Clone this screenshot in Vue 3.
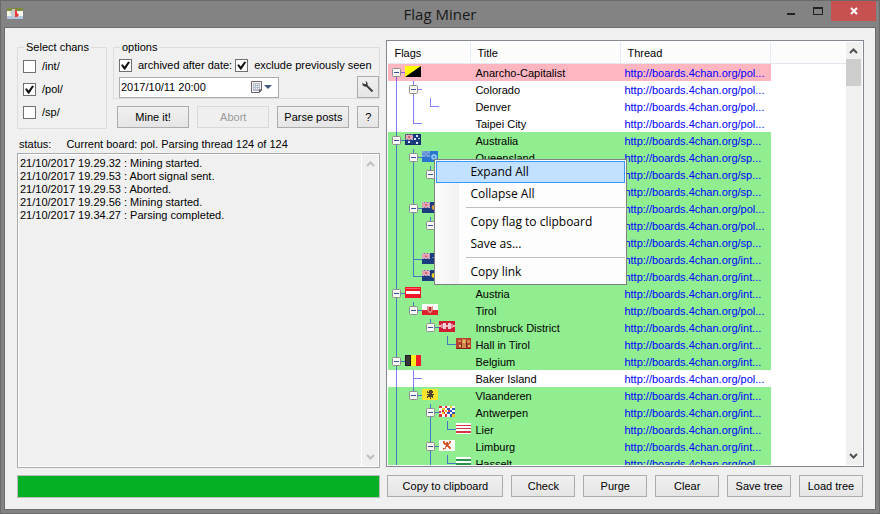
<script setup>
import { ref } from 'vue'

const chans = ref([
  { id: 'int', label: '/int/', on: false },
  { id: 'pol', label: '/pol/', on: true },
  { id: 'sp', label: '/sp/', on: false },
])
const archived = ref(true)
const exclude = ref(true)
const date = ref('2017/10/11 20:00')
const log = `21/10/2017 19.29.32 : Mining started.
21/10/2017 19.29.53 : Abort signal sent.
21/10/2017 19.29.53 : Aborted.
21/10/2017 19.29.56 : Mining started.
21/10/2017 19.34.27 : Parsing completed.`

// Each flag is a list of [path, fill] layers on a 16 x 11 canvas.
const all = 'M0 0h16v11H0z'
const blue = [
  [all, '#1c3c80'],
  ['M0 0h8v6H0z', '#5a6aa8'],
  ['M0 0h1l7 5v1H7L0 1zM8 0H7L0 5v1h1l7-5z', '#e8c4cc'],
  ['M3 0h2v6H3zM0 2h8v2H0z', '#fff'],
  ['M3.5 0h1v6h-1zM0 2.500h8v1H0z', '#e04050'],
]
const flags = {
  ancap: [[all, '#000'], ['M0 0h16L0 11z', '#ff0']],
  australia: [...blue, ['M3 7h2v2H3zM11 1h2v2h-2zM9 4h2v2H9zM13 4h2v1h-2zM11 8h2v2h-2z', '#dde3f5'], ['M0 0h16v11H0zM1 1v9h14V1z', '#10204c80']],
  queensland: [
    [all, '#2a75cf'],
    ['M0 0h8v6H0z', '#7ba4dd'],
    ['M3 0h2v6H3zM0 2h8v2H0z', '#5c8fd8'],
    ['M12 3a3 3 0 1 0 .1 0z', '#8cc6f4'],
    ['M12 5a1 1 0 1 0 .1 0z', '#3a7cd0'],
  ],
  nsw: [...blue, ['M12 3a2.500 2.500 0 1 0 .1 0z', '#d89a3c']],
  victoria: [...blue, ['M12 2h1v2h2v1h-2v3h-1V5h-2V4h2z', '#7080b8']],
  wa: [...blue, ['M12 3a2.500 2.500 0 1 0 .1 0z', '#f0d020'], ['M12 5h2v1h-2z', '#222']],
  austria: [[all, '#f01828'], ['M1 4h14v3H1z', '#fff'], ['M1 1h14v1H1z', '#f86068']],
  tirol: [[all, '#fff'], ['M0 6h16v5H0z', '#e0202c'], ['M5 2l2 1 1-1 1 1 2-1v4L9 9H7L5 6z', '#e08a80'], ['M7 3h2v4H7z', '#c03038']],
  innsbruck: [[all, '#d01c34'], ['M0 4h16v2H0z', '#f0b0b8'], ['M4 2h3v6H4zM9 2h3v6H9z', '#e8d0d4'], ['M2 3h2v4H2zM12 3h2v4h-2z', '#e08a98']],
  hall: [[all, '#b8402c'], ['M2 2h3v2H2zM11 2h3v3h-3zM6 1h4v9H6z', '#cf8a4c'], ['M7 2h2v3H7zM3 7h2v2H3zM12 7h2v2h-2z', '#e0c06a'], ['M5 5h1v4H5zM10 4h1v5h-1zM0 10h16v1H0z', '#7c241c']],
  belgium: [[all, '#f01c28'], ['M0 0h11v11H0z', '#fbee20'], ['M0 0h6v11H0z', '#1c1c1c'], ['M1 1h4v9H1z', '#383838']],
  vlaanderen: [[all, '#fbe42c'], ['M5 2h1v1h1V1h3v1h1v2h-1v1h2v1h-1v3h-1V8H9v2H8V8H6v1H5V7h1V6H5V5h2V4H5z', '#4a4428'], ['M8 3h1v1H8z', '#cc3020']],
  antwerpen: [
    [all, '#fff'],
    ['M0 0h3v2H0zM6 0h2v2H6zM3 4h2v2H3zM0 8h3v3H0zM6 8h2v3H6z', '#e03040'],
    ['M8 2h3v2H8zM13 2h3v2h-3zM11 4h2v2h-2zM8 6h3v2H8zM13 6h3v2h-3zM11 8h2v3h-2z', '#2f58b8'],
    ['M11 0h2v2h-2zM3 2h3v2H3zM6 4h2v2H6zM3 6h3v2H3zM13 8h3v3h-3z', '#f4c020'],
    ['M0 5h2v2H0zM5 6h1v2H5zM9 4h2v2H9z', '#d83848'],
  ],
  lier: [[all, '#fff'], ['M0 2h16v1H0zM0 5h16v1H0zM0 8h16v2H0z', '#d43848']],
  limburg: [[all, '#fff'], ['M4 1h2v2h1V2h2v1h1V1h2v2h-1v1h-1v2h1v1h1v2h-2V8H9V7H7v2H5v1H4V8h2V6h1V5H5V4H4z', '#e0603c'], ['M7 3h2v3H7z', '#c44c20']],
  hasselt: [[all, '#fff'], ['M0 2h16v2H0zM0 6h16v2H0zM0 9h16v2H0z', '#2c9448']],
}

// level: depth; box: expandable; pass: ancestor levels whose line runs through;
// more: the row's own line continues to a later sibling.
const rows = [
  { level: 0, box: true, first: true, more: true, flag: 'ancap', title: 'Anarcho-Capitalist', board: 'pol', tone: 'pink' },
  { level: 1, box: true, more: true, pass: [0], title: 'Colorado', board: 'pol', tone: 'white' },
  { level: 2, pass: [0, 1], title: 'Denver', board: 'pol', tone: 'white' },
  { level: 1, pass: [0], title: 'Taipei City', board: 'pol', tone: 'white' },
  { level: 0, box: true, more: true, flag: 'australia', title: 'Australia', board: 'sp' },
  { level: 1, box: true, more: true, pass: [0], flag: 'queensland', title: 'Queensland', board: 'sp' },
  { level: 2, box: true, pass: [0, 1], title: '', board: 'sp' },
  { level: 3, pass: [0, 1], title: '', board: 'sp' },
  { level: 1, box: true, more: true, pass: [0], flag: 'nsw', title: '', board: 'pol' },
  { level: 2, box: true, pass: [0, 1], title: '', board: 'pol' },
  { level: 3, pass: [0, 1], title: '', board: 'sp' },
  { level: 1, more: true, pass: [0], flag: 'victoria', title: '', board: 'int' },
  { level: 1, pass: [0], flag: 'wa', title: '', board: 'int' },
  { level: 0, box: true, more: true, flag: 'austria', title: 'Austria', board: 'int' },
  { level: 1, box: true, pass: [0], flag: 'tirol', title: 'Tirol', board: 'pol' },
  { level: 2, box: true, pass: [0], flag: 'innsbruck', title: 'Innsbruck District', board: 'int' },
  { level: 3, pass: [0], flag: 'hall', title: 'Hall in Tirol', board: 'int' },
  { level: 0, box: true, more: true, flag: 'belgium', title: 'Belgium', board: 'int' },
  { level: 1, more: true, pass: [0], title: 'Baker Island', board: 'pol', tone: 'white' },
  { level: 1, box: true, pass: [0], flag: 'vlaanderen', title: 'Vlaanderen', board: 'int' },
  { level: 2, box: true, more: true, pass: [0], flag: 'antwerpen', title: 'Antwerpen', board: 'int' },
  { level: 3, pass: [0, 2], flag: 'lier', title: 'Lier', board: 'int' },
  { level: 2, box: true, more: true, pass: [0], flag: 'limburg', title: 'Limburg', board: 'int' },
  { level: 3, pass: [0, 2], flag: 'hasselt', title: 'Hasselt', board: 'pol' },
]

function lines(r) {
  const x = 8 + 17 * r.level
  let d = (r.pass || []).map((l) => `M${8 + 17 * l} 0h1v17h-1z`).join('')
  const top = r.first ? 8 : 0
  d += `M${x} ${top}h1v${(r.more ? 17 : 9) - top}h-1z`
  d += `M${x + 1} 8h8v1h-8z`
  return d
}

const menu = [['Expand All', 'Collapse All'], ['Copy flag to clipboard', 'Save as...'], ['Copy link']]
const actions = ['Copy to clipboard', 'Check', 'Purge', 'Clear', 'Save tree', 'Load tree']
</script>

<template>
  <div class="window">
    <header class="titlebar">
      <svg class="logo" width="16" height="11" viewBox="0 0 16 11">
        <path d="M0 0h16v11H0z" fill="#fbf8ee" />
        <path d="M0 0h16v3H0z" fill="#7d8c3c" />
        <path d="M0 8h16v3H0z" fill="#b4c6dc" />
        <path d="M3 4l3-3h2v6l-2 2-2-2z" fill="#c9cbcb" />
        <path d="M8 1l2 2v2l2 2-2 2H8z" fill="#ea3838" />
      </svg>
      <h1>Flag Miner</h1>
      <div class="caption">
        <button type="button" class="cap" aria-label="Minimize">
          <svg width="10" height="10"><path d="M1 7h8v2H1z" fill="#222" /></svg>
        </button>
        <button type="button" class="cap" aria-label="Maximize">
          <svg width="10" height="10"><path d="M0 1h10v8H0zM1 3v5h8V3z" fill="#222" fill-rule="evenodd" /></svg>
        </button>
        <button type="button" class="cap close" aria-label="Close">
          <svg width="8" height="8"><path d="M1 1l6 6M7 1L1 7" stroke="#fff" stroke-width="2" /></svg>
        </button>
      </div>
    </header>

    <main class="client">
      <section class="left">
        <div class="setup">
          <fieldset class="chans">
            <legend>Select chans</legend>
            <label v-for="c in chans" :key="c.id" class="check">
              <input v-model="c.on" type="checkbox" />{{ c.label }}
            </label>
          </fieldset>
          <div class="side">
            <fieldset class="options">
              <legend>options</legend>
              <div class="checks">
                <label class="check"><input v-model="archived" type="checkbox" />archived after date:</label>
                <label class="check"><input v-model="exclude" type="checkbox" />exclude previously seen</label>
              </div>
              <div class="dates">
                <div class="date">
                  <input v-model="date" type="text" aria-label="Archived after date" />
                  <button type="button" class="drop" aria-label="Open calendar">
                    <svg width="21" height="12">
                      <path d="M.5.5h10v9l-2 2h-8z" fill="#f4f4f4" stroke="#6e6666" />
                      <path d="M2 2h7v8H2z" fill="#b4bccb" />
                      <path d="M3 3h1v1H3zM5 3h1v1H5zM7 3h1v1H7zM3 5h1v1H3zM5 5h1v1H5zM7 5h1v1H7zM3 7h1v1H3zM5 7h1v1H5zM7 7h1v1H7z" fill="#fff" />
                      <path d="M11 8.500l-3 3V8.500z" fill="#555" />
                      <path d="M13 4h8l-4 4z" fill="#40587c" />
                    </svg>
                  </button>
                </div>
                <button type="button" class="btn tool" aria-label="Settings">
                  <svg width="12" height="12" viewBox="0 0 12 12">
                    <path d="M4.500 4.500L10.500 10.500" stroke="#3c3c3c" stroke-width="2" />
                    <path d="M3 0l1 1v2H2L.5 1.500Q0 4 1.500 5T4.500 5.500L5.500 4.500Q6 2 5 1T3 0z" fill="#3c3c3c" />
                  </svg>
                </button>
              </div>
            </fieldset>
            <div class="mine">
              <button type="button" class="btn">Mine it!</button>
              <button type="button" class="btn" disabled>Abort</button>
              <button type="button" class="btn">Parse posts</button>
              <button type="button" class="btn help">?</button>
            </div>
          </div>
        </div>
        <div class="status">
          <label for="log">status:</label>
          <output>Current board: pol. Parsing thread 124 of 124</output>
        </div>
        <div class="log">
          <textarea id="log" readonly :value="log"></textarea>
          <div class="bar faint">
            <svg width="9" height="6"><path d="M1 5l3.500-3.500L8 5" /></svg>
            <svg width="9" height="6"><path d="M1 1l3.500 3.500L8 1" /></svg>
          </div>
        </div>
        <div class="progress" role="progressbar" aria-label="Parsing" aria-valuenow="100"></div>
      </section>

      <section class="right">
        <div class="tree">
          <div class="view">
            <table>
              <thead>
                <tr><th class="c1">Flags</th><th class="c2">Title</th><th class="c3">Thread</th><th></th></tr>
              </thead>
              <tbody>
                <tr v-for="(r, i) in rows" :key="i" :class="r.tone || 'green'">
                  <td class="c1">
                    <svg class="node" width="83" height="17">
                      <path :d="lines(r)" fill="#00f" fill-opacity=".5" />
                      <g v-if="r.box" :transform="`translate(${4 + 17 * r.level} 4)`">
                        <rect x=".5" y=".5" width="8" height="8" rx="1" fill="#f8f8f8" stroke="#8e8e8e" />
                        <path d="M2 4h5v1H2z" fill="#3c50a0" />
                      </g>
                      <g v-if="r.flag" :transform="`translate(${17 + 17 * r.level} 2)`">
                        <path v-for="(p, k) in flags[r.flag]" :key="k" :d="p[0]" :fill="p[1]" fill-rule="evenodd" />
                      </g>
                    </svg>
                  </td>
                  <td class="c2">{{ r.title }}</td>
                  <td class="c3"><a href="#">http://boards.4chan.org/{{ r.board }}...</a></td>
                  <td class="rest"></td>
                </tr>
              </tbody>
            </table>
          </div>
          <div class="bar">
            <svg width="9" height="6"><path d="M1 5l3.500-3.500L8 5" /></svg>
            <i class="thumb"></i>
            <svg width="9" height="6"><path d="M1 1l3.500 3.500L8 1" /></svg>
          </div>
          <div class="menu" role="menu">
            <div v-for="(g, i) in menu" :key="i" class="group">
              <button v-for="m in g" :key="m" type="button" role="menuitem" :class="{ hot: m === 'Expand All' }">{{ m }}</button>
            </div>
          </div>
        </div>
        <div class="actions">
          <button v-for="a in actions" :key="a" type="button" class="btn" :class="{ wide: a === 'Copy to clipboard' }">{{ a }}</button>
        </div>
      </section>
    </main>
  </div>
</template>

<style>
body {
  margin: 0;
}
</style>

<style scoped>
* {
  box-sizing: border-box;
}
.window {
  display: flex;
  flex-direction: column;
  height: 100vh;
  padding: 0 4px 4px;
  background: #838383;
  box-shadow: inset 0 0 0 1px #6a6a6a;
  font: 11px/13px "Liberation Sans", Arial, sans-serif;
  color: #000;
}
button,
input,
textarea {
  font: inherit;
  color: inherit;
}
.titlebar {
  display: grid;
  grid-template-columns: 1fr auto 1fr;
  height: 27px;
  flex: none;
}
.logo {
  margin: 8px 0 0 3px;
}
h1 {
  margin: 0;
  font: 15px/28px "Open Sans", "Noto Sans", sans-serif;
  color: #1a1a1a;
}
.caption {
  display: flex;
  justify-content: flex-end;
  padding-top: 1px;
}
.cap {
  display: flex;
  align-items: center;
  justify-content: center;
  width: 27px;
  height: 20px;
  padding: 0;
  border: 0;
  background: none;
}
.cap.close {
  width: 45px;
  background: #c75050;
}
.client {
  flex: 1;
  min-height: 0;
  display: grid;
  grid-template-columns: 363fr 477fr;
  gap: 6px;
  padding: 12px 11px 11px 12px;
  border: 1px solid #6c6c6c;
  background: #f0f0f0;
}
.left,
.right {
  display: flex;
  flex-direction: column;
  min-width: 0;
  min-height: 0;
}
.setup {
  display: flex;
  gap: 6px;
}
fieldset {
  margin: 0;
  min-width: 0;
  padding: 0 0 0 5px;
  border: 1px solid #dcdcdc;
}
legend {
  padding: 0 2px;
  margin-left: 1px;
  line-height: 14px;
}
.chans {
  width: 90px;
  height: 89px;
}
.chans .check {
  height: 23px;
}
.chans .check:nth-of-type(1) {
  margin-top: 1px;
}
.check {
  display: flex;
  align-items: center;
  gap: 6px;
  white-space: nowrap;
}
.check input {
  appearance: none;
  flex: none;
  display: grid;
  place-items: center;
  width: 13px;
  height: 13px;
  margin: 0;
  border: 1px solid #707070;
  background: #fff;
}
.check input:checked::before {
  content: "";
  width: 9px;
  height: 9px;
  background: #111;
  clip-path: polygon(0 45%, 18% 35%, 40% 62%, 80% 5%, 100% 15%, 45% 98%, 35% 98%);
}
.side {
  flex: 1;
  display: flex;
  flex-direction: column;
  gap: 7px;
}
.options {
  height: 59px;
}
.checks {
  display: flex;
  gap: 3px;
  padding-top: 5px;
}
.dates {
  display: flex;
  justify-content: space-between;
  align-items: center;
  padding-top: 4px;
}
.date {
  display: flex;
  width: 160px;
  height: 21px;
  border: 1px solid #abadb3;
  background: #fff;
}
.date input {
  flex: 1;
  min-width: 0;
  padding: 0 0 0 1px;
  border: 0;
  background: none;
}
.drop {
  display: flex;
  align-items: center;
  padding: 0 6px 0 0;
  border: 0;
  background: none;
}
.btn {
  flex: 1;
  height: 22px;
  padding: 0;
  border: 1px solid #acacac;
  background: linear-gradient(#f0f0f0, #e5e5e5);
  white-space: nowrap;
}
.btn:disabled {
  border-color: #d9d9d9;
  background: #efefef;
  color: #9a9a9a;
}
.btn.tool,
.btn.help {
  flex: none;
  display: grid;
  place-items: center;
  width: 22px;
}
.mine {
  display: flex;
  gap: 8px;
  padding: 0 1px 0 4px;
}
.status {
  display: flex;
  gap: 15px;
  padding: 9px 0 2px 2px;
}
.log {
  flex: 1;
  min-height: 0;
  display: flex;
  padding: 1px;
  border: 1px solid #ababab;
  background: #fff;
}
textarea {
  flex: 1;
  min-width: 0;
  padding: 2px 1px;
  border: 0;
  resize: none;
  overflow: hidden;
  background: #f0f0f0;
}
.bar {
  flex: none;
  display: flex;
  flex-direction: column;
  align-items: center;
  width: 16px;
  padding: 6px 0;
  background: #f0f0f0;
}
.bar svg {
  fill: none;
  stroke: #505050;
  stroke-width: 2;
}
.bar svg:last-child {
  margin-top: auto;
}
.bar.faint {
  margin-left: 1px;
}
.bar.faint svg {
  stroke: #bfbfbf;
}
.thumb {
  width: 15px;
  height: 27px;
  margin-top: 5px;
  background: #cdcdcd;
}
.progress {
  height: 23px;
  margin-top: 7px;
  border: 1px solid #bcbcbc;
  background: #06b025;
}
.tree {
  position: relative;
  flex: 1;
  min-height: 0;
  display: flex;
  padding: 1px;
  border: 1px solid #828790;
  background: #fff;
}
.view {
  flex: 1;
  min-width: 0;
  overflow: hidden;
}
table {
  width: 100%;
  table-layout: fixed;
  border-collapse: separate;
  border-spacing: 0;
}
th {
  height: 22px;
  padding: 1px 0 0 6px;
  border-right: 1px solid #e3ecf8;
  border-bottom: 1px solid #e3e8f0;
  background: #fcfcfc;
  font-weight: normal;
  text-align: left;
}
th:last-child {
  border-right: 0;
}
th.c1 {
  width: 83px;
}
th.c2 {
  width: 150px;
}
th.c3 {
  width: 150px;
}
td {
  height: 17px;
  padding: 2px 0 0 4px;
  line-height: 15px;
  white-space: nowrap;
  overflow: hidden;
}
td.c1 {
  padding: 0;
}
td.c3 {
  padding-left: 3px;
}
.node {
  display: block;
}
.green td {
  background: #90ee90;
}
.pink td {
  background: #ffb6c1;
}
tr td.rest {
  background: #fff;
}
a {
  color: #00f;
  text-decoration: none;
}
.menu {
  position: absolute;
  left: 47px;
  top: 118px;
  width: 193px;
  padding: 1px;
  border: 1px solid #808080;
  background: linear-gradient(90deg, #fcfcfc, #f1f1f1 24px, #fdfdfd 24px);
  font: 12px/20px "Open Sans", "Noto Sans", sans-serif;
}
.group + .group {
  margin-top: 2px;
  padding-top: 3px;
  border-top: 1px solid #bdbdbd;
  border-image: linear-gradient(90deg, transparent 31px, #bdbdbd 31px) 1;
}
.menu button {
  display: block;
  width: 100%;
  height: 22px;
  padding: 0 0 0 33px;
  border: 1px solid transparent;
  background: none;
  text-align: left;
  line-height: 20px;
}
.menu button.hot {
  border-color: #3399ff;
  background: #c2e0ff;
}
.actions {
  display: flex;
  gap: 8px;
  padding: 8px 1px 1px;
}
.btn.wide {
  flex: none;
  width: 116px;
}
</style>
